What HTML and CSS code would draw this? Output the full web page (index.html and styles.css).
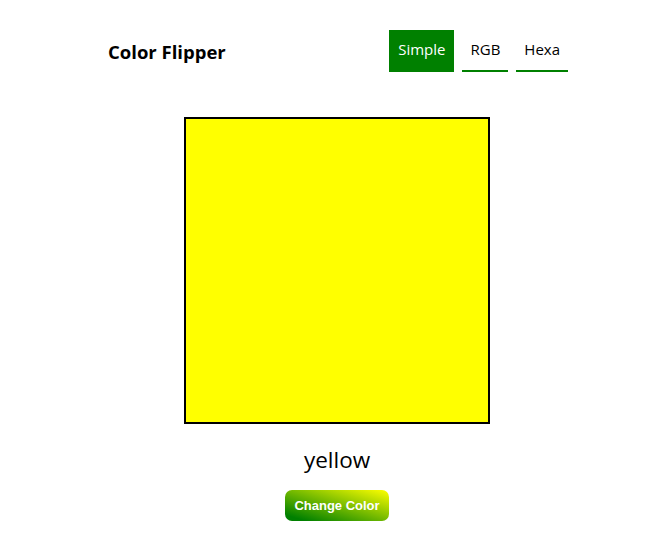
FILE: index.html
```html
<!DOCTYPE html>
<html>
<head>
<meta charset="utf-8">
<link rel="stylesheet" href="styles.css">
</head>
<body>
<header class="header">
  <h1 class="title">Color Flipper</h1>
  <nav class="nav">
    <a class="nav-link active">Simple</a>
    <a class="nav-link">RGB</a>
    <a class="nav-link">Hexa</a>
  </nav>
</header>
<main class="main">
  <div class="swatch"></div>
  <p class="color-name">yellow</p>
  <button class="btn">Change Color</button>
</main>
</body>
</html>
```
FILE: styles.css
```css
body {
  margin: 0;
  font-family: "Open Sans", "Noto Sans", sans-serif;
  color: #000;
  background: #fff;
}
.header {
  width: 460px;
  margin: 30px auto 0;
  padding-left: 4px;
  display: flex;
  justify-content: space-between;
  align-items: center;
}
.title {
  margin: 0;
  font-size: 18.5px;
  font-weight: 700;
}
.nav {
  display: flex;
  gap: 8px;
}
.nav-link {
  display: block;
  height: 40px;
  line-height: 38px;
  padding: 0 8px;
  font-size: 15px;
  color: #000;
  border-bottom: 2px solid #008000;
  box-sizing: content-box;
}
.nav-link.active {
  padding: 0 9px;
  background: #008000;
  color: #fff;
}
.main {
  display: flex;
  flex-direction: column;
  align-items: center;
  margin-top: 45px;
  padding-left: 2px;
}
.swatch {
  width: 302px;
  height: 303px;
  border: 2px solid #000;
  background: #ffff00;
}
.color-name {
  margin: 21px 0 0;
  font-size: 22.5px;
  line-height: 30px;
}
.btn {
  margin-top: 15px;
  height: 31px;
  padding: 0 9px;
  border: none;
  border-radius: 7px;
  font-family: "Liberation Sans", Arial, sans-serif;
  font-weight: 700;
  font-size: 13px;
  color: #fff;
  background: linear-gradient(to top right, #008000 10%, #ffff00);
}
```
